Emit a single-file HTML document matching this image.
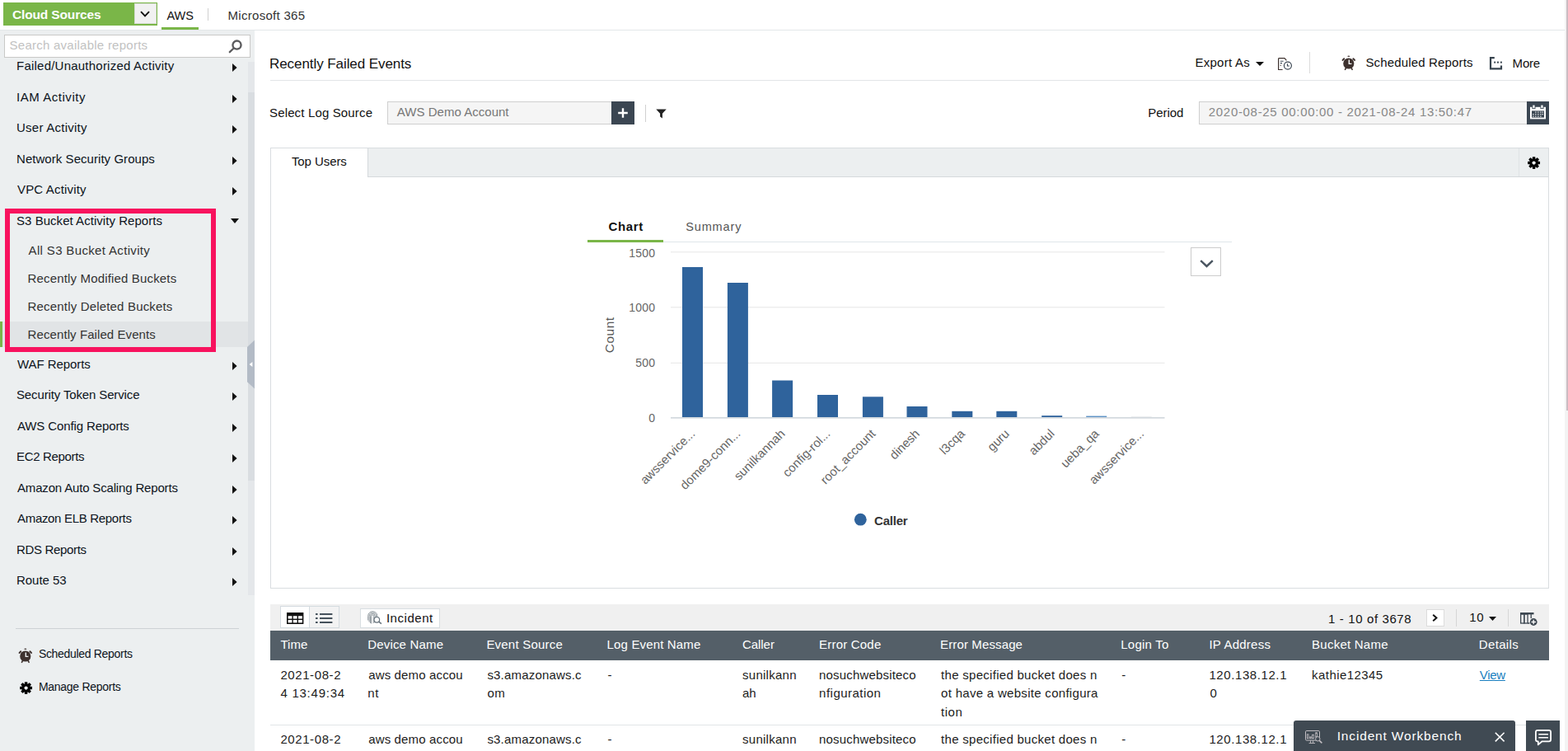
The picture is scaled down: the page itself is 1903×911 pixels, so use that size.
<!DOCTYPE html>
<html><head><meta charset="utf-8"><title>Recently Failed Events</title>
<style>
html,body{margin:0;padding:0;}
body{width:1903px;height:911px;overflow:hidden;position:relative;background:#fff;font-family:"Liberation Sans",sans-serif;font-size:15px;color:#111;}
.a{position:absolute;box-sizing:border-box;}
.t{position:absolute;white-space:pre;line-height:20px;}
svg{position:absolute;overflow:visible;}
</style></head><body>
<div class="a" style="left:0px;top:36px;width:1899px;height:1px;background:#e3e7e9;"></div>
<div class="a" style="left:4px;top:3px;width:187px;height:28px;background:#7ab648;"></div>
<div class="t" style="left:15.00px;top:8px;font-size:15.5px;color:#fff;letter-spacing:-0.150px;font-weight:bold;">Cloud Sources</div>
<div class="a" style="left:163px;top:4px;width:27px;height:25px;background:#f1f1f1;border:1px solid #d6dcd2;"></div>
<svg style="left:170px;top:13px" width="12" height="8" viewBox="0 0 12 8"><path d="M1 1.2 L6 6.4 L11 1.2" fill="none" stroke="#111" stroke-width="1.9"/></svg>
<div class="t" style="left:202.50px;top:9px;font-size:14.5px;color:#111;letter-spacing:-0.050px;">AWS</div>
<div class="a" style="left:196px;top:33px;width:45px;height:3px;background:#7ab648;"></div>
<div class="a" style="left:252px;top:10px;width:1px;height:15px;background:#d0d0d0;"></div>
<div class="t" style="left:276.50px;top:9px;font-size:15px;color:#333;letter-spacing:0.292px;">Microsoft 365</div>
<div class="a" style="left:0px;top:37px;width:309px;height:874px;background:#eceff0;"></div>
<div class="a" style="left:301px;top:75px;width:8px;height:647px;background:#e4e7ea;"></div>
<div class="a" style="left:301px;top:112px;width:8px;height:471px;background:#d9dde1;"></div>
<div class="a" style="left:5px;top:42px;width:299px;height:28px;background:#fff;border:1px solid #c9c9c7;"></div>
<div class="t" style="left:11.60px;top:45px;font-size:15px;color:#c2c2c2;letter-spacing:0.248px;">Search available reports</div>
<svg style="left:277px;top:48px" width="17" height="17" viewBox="0 0 17 17"><circle cx="10.5" cy="6.6" r="5.05" fill="none" stroke="#5c5c5e" stroke-width="2.4"/><path d="M6.7 10.5 L1.8 15.2" stroke="#5c5c5e" stroke-width="2.3" stroke-linecap="round"/></svg>
<div class="a" style="left:0px;top:390px;width:301px;height:31px;background:#e1e4e6;"></div>
<div class="a" style="left:0px;top:390px;width:3px;height:31px;background:#7ab648;"></div>
<div class="t" style="left:20.00px;top:70px;font-size:15px;color:#0d1420;letter-spacing:0.226px;">Failed/Unauthorized Activity</div>
<svg style="left:282.3px;top:77.0px" width="6" height="10" viewBox="0 0 6 10"><path d="M0 0 L5.6 5 L0 10 Z" fill="#111"/></svg>
<div class="t" style="left:20.00px;top:108px;font-size:15px;color:#0d1420;letter-spacing:0.545px;">IAM Activity</div>
<svg style="left:282.3px;top:115.0px" width="6" height="10" viewBox="0 0 6 10"><path d="M0 0 L5.6 5 L0 10 Z" fill="#111"/></svg>
<div class="t" style="left:20.00px;top:145px;font-size:15px;color:#0d1420;letter-spacing:0.250px;">User Activity</div>
<svg style="left:282.3px;top:152.0px" width="6" height="10" viewBox="0 0 6 10"><path d="M0 0 L5.6 5 L0 10 Z" fill="#111"/></svg>
<div class="t" style="left:20.00px;top:183px;font-size:15px;color:#0d1420;letter-spacing:0.050px;">Network Security Groups</div>
<svg style="left:282.3px;top:190.0px" width="6" height="10" viewBox="0 0 6 10"><path d="M0 0 L5.6 5 L0 10 Z" fill="#111"/></svg>
<div class="t" style="left:21.00px;top:220px;font-size:15px;color:#0d1420;letter-spacing:0.164px;">VPC Activity</div>
<svg style="left:282.3px;top:227.0px" width="6" height="10" viewBox="0 0 6 10"><path d="M0 0 L5.6 5 L0 10 Z" fill="#111"/></svg>
<div class="t" style="left:20.00px;top:258px;font-size:15px;color:#0d1420;letter-spacing:0.040px;">S3 Bucket Activity Reports</div>
<svg style="left:280px;top:265.0px" width="10" height="6" viewBox="0 0 10 6"><path d="M0 0 H10 L5 6 Z" fill="#111"/></svg>
<div class="t" style="left:21.00px;top:432px;font-size:15px;color:#0d1420;letter-spacing:-0.070px;">WAF Reports</div>
<svg style="left:282.3px;top:439.0px" width="6" height="10" viewBox="0 0 6 10"><path d="M0 0 L5.6 5 L0 10 Z" fill="#111"/></svg>
<div class="t" style="left:20.00px;top:469px;font-size:15px;color:#0d1420;letter-spacing:-0.133px;">Security Token Service</div>
<svg style="left:282.3px;top:476.0px" width="6" height="10" viewBox="0 0 6 10"><path d="M0 0 L5.6 5 L0 10 Z" fill="#111"/></svg>
<div class="t" style="left:21.00px;top:507px;font-size:15px;color:#0d1420;letter-spacing:-0.118px;">AWS Config Reports</div>
<svg style="left:282.3px;top:514.0px" width="6" height="10" viewBox="0 0 6 10"><path d="M0 0 L5.6 5 L0 10 Z" fill="#111"/></svg>
<div class="t" style="left:20.00px;top:544px;font-size:15px;color:#0d1420;letter-spacing:-0.330px;">EC2 Reports</div>
<svg style="left:282.3px;top:551.0px" width="6" height="10" viewBox="0 0 6 10"><path d="M0 0 L5.6 5 L0 10 Z" fill="#111"/></svg>
<div class="t" style="left:21.00px;top:582px;font-size:15px;color:#0d1420;letter-spacing:-0.169px;">Amazon Auto Scaling Reports</div>
<svg style="left:282.3px;top:589.0px" width="6" height="10" viewBox="0 0 6 10"><path d="M0 0 L5.6 5 L0 10 Z" fill="#111"/></svg>
<div class="t" style="left:21.00px;top:619px;font-size:15px;color:#0d1420;letter-spacing:-0.312px;">Amazon ELB Reports</div>
<svg style="left:282.3px;top:626.0px" width="6" height="10" viewBox="0 0 6 10"><path d="M0 0 L5.6 5 L0 10 Z" fill="#111"/></svg>
<div class="t" style="left:20.00px;top:657px;font-size:15px;color:#0d1420;letter-spacing:-0.330px;">RDS Reports</div>
<svg style="left:282.3px;top:664.0px" width="6" height="10" viewBox="0 0 6 10"><path d="M0 0 L5.6 5 L0 10 Z" fill="#111"/></svg>
<div class="t" style="left:20.00px;top:694px;font-size:15px;color:#0d1420;letter-spacing:-0.043px;">Route 53</div>
<svg style="left:282.3px;top:701.0px" width="6" height="10" viewBox="0 0 6 10"><path d="M0 0 L5.6 5 L0 10 Z" fill="#111"/></svg>
<div class="t" style="left:34.60px;top:294px;font-size:15px;color:#333;letter-spacing:0.343px;">All S3 Bucket Activity</div>
<div class="t" style="left:33.60px;top:328px;font-size:15px;color:#333;letter-spacing:0.158px;">Recently Modified Buckets</div>
<div class="t" style="left:33.60px;top:362px;font-size:15px;color:#333;letter-spacing:0.174px;">Recently Deleted Buckets</div>
<div class="t" style="left:33.60px;top:396px;font-size:15px;color:#333;letter-spacing:0.086px;">Recently Failed Events</div>
<div class="a" style="left:6px;top:253px;width:256px;height:174px;border:6px solid #f8125e;"></div>
<svg style="left:299px;top:412px" width="10" height="60" viewBox="0 0 10 60"><path d="M10 0.6 L10 59.4 L1 51.2 L1 9 Z" fill="#b3bbc6"/><path d="M7.4 27 L3.6 30 L7.4 33 Z" fill="#fff"/></svg>
<div class="a" style="left:19px;top:762px;width:271px;height:1px;background:#cdd2d5;"></div>
<div class="t" style="left:46.90px;top:783px;font-size:14px;color:#0d1420;letter-spacing:-0.312px;">Scheduled Reports</div>
<div class="t" style="left:46.90px;top:823px;font-size:14px;color:#0d1420;letter-spacing:-0.277px;">Manage Reports</div>
<svg style="left:21.8px;top:785.5px" width="18" height="19" viewBox="0 0 18 19"><circle cx="8.8" cy="10" r="6.6" fill="#3e322f"/><path d="M9.3 5.6 V10.4 H12.4" fill="none" stroke="#eceff0" stroke-width="1.4"/><path d="M1.6 5.9 L3.2 4.2 M16 5.9 L14.4 4.2" stroke="#3e322f" stroke-width="2" stroke-linecap="round"/><path d="M5.5 15.4 L4.5 17.4 M12.1 15.4 L13.1 17.4" stroke="#3e322f" stroke-width="1.6" stroke-linecap="round"/><path d="M7.6 1.5 Q8.8 0.6 10 1.5" fill="none" stroke="#3e322f" stroke-width="1.3"/></svg>
<svg style="left:24px;top:827.4px" width="15.2" height="15.2" viewBox="-10 -10 20 20"><g fill="#000"><rect x="-2.3" y="-9.8" width="4.6" height="19.6" rx="0.9" transform="rotate(0)"/><rect x="-2.3" y="-9.8" width="4.6" height="19.6" rx="0.9" transform="rotate(45)"/><rect x="-2.3" y="-9.8" width="4.6" height="19.6" rx="0.9" transform="rotate(90)"/><rect x="-2.3" y="-9.8" width="4.6" height="19.6" rx="0.9" transform="rotate(135)"/><circle r="7"/></g><circle r="2.8" fill="#eceff0"/></svg>
<div class="t" style="left:327.00px;top:68px;font-size:17px;color:#111;letter-spacing:-0.071px;">Recently Failed Events</div>
<div class="a" style="left:328px;top:97px;width:1552px;height:1px;background:#e2e5e7;"></div>
<div class="t" style="left:1450.40px;top:66px;font-size:15px;color:#111;letter-spacing:0.275px;">Export As</div>
<svg style="left:1524.3px;top:74.8px" width="10" height="5" viewBox="0 0 10 5"><path d="M0 0 H10 L5 5 Z" fill="#111"/></svg>
<svg style="left:1551px;top:70px" width="18" height="16" viewBox="0 0 18 16"><path d="M0.6 0.7 H8 L10.4 3.3 M0.6 0.7 V14.5 H5.6" fill="none" stroke="#3e322f" stroke-width="1.2"/><path d="M2.8 4.3 H6.6 M2.8 6.6 H5" stroke="#3e4a56" stroke-width="1.1"/><rect x="2.7" y="8.8" width="1.1" height="1.1" fill="#3e322f"/><circle cx="11.9" cy="9.6" r="4.5" fill="#fff" stroke="#3b4652" stroke-width="1.2"/><path d="M11.5 7.3 V10 H13.8" fill="none" stroke="#3b4652" stroke-width="1.1"/></svg>
<div class="a" style="left:1589px;top:63px;width:1px;height:26px;background:#dcdcdc;"></div>
<svg style="left:1627.5px;top:66.5px" width="18" height="19" viewBox="0 0 18 19"><circle cx="8.8" cy="10" r="6.6" fill="#3e322f"/><path d="M9.3 5.6 V10.4 H12.4" fill="none" stroke="#fff" stroke-width="1.4"/><path d="M1.6 5.9 L3.2 4.2 M16 5.9 L14.4 4.2" stroke="#3e322f" stroke-width="2" stroke-linecap="round"/><path d="M5.5 15.4 L4.5 17.4 M12.1 15.4 L13.1 17.4" stroke="#3e322f" stroke-width="1.6" stroke-linecap="round"/><path d="M7.6 1.5 Q8.8 0.6 10 1.5" fill="none" stroke="#3e322f" stroke-width="1.3"/></svg>
<div class="t" style="left:1657.40px;top:66px;font-size:15px;color:#111;letter-spacing:0.162px;">Scheduled Reports</div>
<svg style="left:1808px;top:69.4px" width="15" height="15.6" viewBox="0 0 15 15.6"><path d="M5.8 1.2 H1 V14.3 H14 V10.6" fill="none" stroke="#37434e" stroke-width="2.2"/><g fill="#37434e"><rect x="5.2" y="5.6" width="1.9" height="2"/><rect x="9" y="5.6" width="1.9" height="2"/><rect x="12.9" y="5.6" width="2" height="2"/></g></svg>
<div class="t" style="left:1835.60px;top:67px;font-size:15px;color:#111;letter-spacing:-0.200px;">More</div>
<div class="t" style="left:327.00px;top:127px;font-size:15px;color:#111;letter-spacing:0.150px;">Select Log Source</div>
<div class="a" style="left:470px;top:123px;width:273px;height:28px;background:#f5f5f5;border:1px solid #cfcfcf;"></div>
<div class="t" style="left:481.80px;top:126px;font-size:15px;color:#777;letter-spacing:0.027px;">AWS Demo Account</div>
<div class="a" style="left:742px;top:123px;width:28px;height:28px;background:#3b4652;"></div>
<svg style="left:749px;top:130px" width="14" height="14" viewBox="0 0 14 14"><path d="M7 1.2 V12.8 M1.2 7 H12.8" stroke="#fff" stroke-width="2.4"/></svg>
<div class="a" style="left:783px;top:127px;width:1px;height:21px;background:#d0d0d0;"></div>
<svg style="left:795.5px;top:131.5px" width="13" height="12" viewBox="0 0 13 12"><path d="M0.3 0.5 H12.7 L7.9 5.8 V11.5 L5.1 9.6 V5.8 Z" fill="#222"/></svg>
<div class="t" style="left:1393.30px;top:127px;font-size:15px;color:#111;letter-spacing:-0.060px;">Period</div>
<div class="a" style="left:1455px;top:123px;width:399px;height:28px;background:#f5f5f5;border:1px solid #cfcfcf;"></div>
<div class="t" style="left:1466.80px;top:126px;font-size:15px;color:#888;letter-spacing:0.685px;">2020-08-25 00:00:00 - 2021-08-24 13:50:47</div>
<div class="a" style="left:1853px;top:123px;width:27px;height:28px;background:#3b4652;"></div>
<svg style="left:1857px;top:126.8px" width="19" height="17.6" viewBox="0 0 19 17.6"><rect x="0" y="2.8" width="19" height="14.6" fill="#fff"/><rect x="2" y="7.4" width="15" height="8.2" fill="#3b4753"/><rect x="2.9" y="0.1" width="3.1" height="4.6" fill="#fff" stroke="#3b4753" stroke-width="0.9"/><rect x="12.9" y="0.1" width="3.1" height="4.6" fill="#fff" stroke="#3b4753" stroke-width="0.9"/><g fill="#fff"><rect x="6.2" y="8.5" width="1.3" height="1.2"/><rect x="9.2" y="8.5" width="1.3" height="1.2"/><rect x="12.2" y="8.5" width="1.3" height="1.2"/><rect x="14.6" y="8.5" width="1.3" height="1.2"/><rect x="3.2" y="11" width="1.3" height="1.2"/><rect x="6.2" y="11" width="1.3" height="1.2"/><rect x="9.2" y="11" width="1.3" height="1.2"/><rect x="12.2" y="11" width="1.3" height="1.2"/><rect x="14.6" y="11" width="1.3" height="1.2"/><rect x="3.2" y="13.5" width="1.3" height="1.2"/><rect x="6.2" y="13.5" width="1.3" height="1.2"/><rect x="9.2" y="13.5" width="1.3" height="1.2"/><rect x="12.2" y="13.5" width="1.3" height="1.2"/></g></svg>
<div class="a" style="left:328px;top:179px;width:1552px;height:535px;background:#fff;border:1px solid #d9dde0;"></div>
<div class="a" style="left:329px;top:180px;width:1550px;height:35px;background:#eceff0;border-bottom:1px solid #d5d9dc;"></div>
<div class="a" style="left:329px;top:180px;width:118px;height:35px;background:#fff;border-right:1px solid #d5d9dc;"></div>
<div class="t" style="left:353.90px;top:186px;font-size:15px;color:#111;letter-spacing:-0.075px;">Top Users</div>
<div class="a" style="left:1843px;top:180px;width:1px;height:34px;background:#dfe3e5;"></div>
<svg style="left:1854px;top:189.8px" width="15.2" height="15.2" viewBox="-10 -10 20 20"><g fill="#000"><rect x="-2.3" y="-9.8" width="4.6" height="19.6" rx="0.9" transform="rotate(0)"/><rect x="-2.3" y="-9.8" width="4.6" height="19.6" rx="0.9" transform="rotate(45)"/><rect x="-2.3" y="-9.8" width="4.6" height="19.6" rx="0.9" transform="rotate(90)"/><rect x="-2.3" y="-9.8" width="4.6" height="19.6" rx="0.9" transform="rotate(135)"/><circle r="7"/></g><circle r="2.8" fill="#eceff0"/></svg>
<div class="t" style="left:738.60px;top:265px;font-size:15px;color:#111;letter-spacing:0.625px;font-weight:bold;">Chart</div>
<div class="t" style="left:832.20px;top:265px;font-size:14.5px;color:#555;letter-spacing:0.867px;">Summary</div>
<div class="a" style="left:713px;top:293px;width:782px;height:1px;background:#dfe6ea;"></div>
<div class="a" style="left:713px;top:291px;width:92px;height:3px;background:#7ab648;"></div>
<div class="a" style="left:1445px;top:300px;width:37px;height:35px;background:#fff;border:1px solid #ccc;"></div>
<svg style="left:1455.5px;top:314.5px" width="17" height="10" viewBox="0 0 17 10"><path d="M1.2 1.2 L8.5 8 L15.8 1.2" fill="none" stroke="#4a5560" stroke-width="2.4"/></svg>
<svg style="left:700px;top:250px" width="800" height="410" viewBox="700 250 800 410" font-family="Liberation Sans, sans-serif"><path d="M814 305.8 H1413.5" stroke="#e6e6e6" stroke-width="1"/><path d="M814 372.8 H1413.5" stroke="#e6e6e6" stroke-width="1"/><path d="M814 440.3 H1413.5" stroke="#e6e6e6" stroke-width="1"/><rect x="814" y="506" width="599.5" height="1.7" fill="#d3d9de"/><rect x="828" y="324" width="25" height="182.0" fill="#2f639c"/><text x="844.5" y="527" font-size="15" fill="#666" text-anchor="end" transform="rotate(-45 844.5 527)">awsservice...</text><rect x="882.9" y="343" width="25" height="163.0" fill="#2f639c"/><text x="899.4" y="527" font-size="15" fill="#666" text-anchor="end" transform="rotate(-45 899.4 527)">dome9-conn...</text><rect x="937.1" y="461.5" width="25" height="44.5" fill="#2f639c"/><text x="953.6" y="527" font-size="15" fill="#666" text-anchor="end" transform="rotate(-45 953.6 527)">sunilkannah</text><rect x="992" y="479" width="25" height="27.0" fill="#2f639c"/><text x="1008.5" y="527" font-size="15" fill="#666" text-anchor="end" transform="rotate(-45 1008.5 527)">config-rol...</text><rect x="1046.9" y="481.3" width="25" height="24.7" fill="#2f639c"/><text x="1063.4" y="527" font-size="15" fill="#666" text-anchor="end" transform="rotate(-45 1063.4 527)">root_account</text><rect x="1100.5" y="493" width="25" height="13.0" fill="#2f639c"/><text x="1117.0" y="527" font-size="15" fill="#666" text-anchor="end" transform="rotate(-45 1117.0 527)">dinesh</text><rect x="1155.3" y="498.8" width="25" height="7.2" fill="#2f639c"/><text x="1171.8" y="527" font-size="15" fill="#666" text-anchor="end" transform="rotate(-45 1171.8 527)">l3cqa</text><rect x="1209.3" y="498.8" width="25" height="7.2" fill="#2f639c"/><text x="1225.8" y="527" font-size="15" fill="#666" text-anchor="end" transform="rotate(-45 1225.8 527)">guru</text><rect x="1264.2" y="504.2" width="25" height="1.8" fill="#2f639c"/><text x="1280.7" y="527" font-size="15" fill="#666" text-anchor="end" transform="rotate(-45 1280.7 527)">abdul</text><rect x="1318.2" y="504.6" width="25" height="1.4" fill="#5f93c6"/><text x="1334.7" y="527" font-size="15" fill="#666" text-anchor="end" transform="rotate(-45 1334.7 527)">ueba_qa</text><rect x="1372.7" y="505.6" width="25" height="0.4" fill="#d0d4d8"/><text x="1389.2" y="527" font-size="15" fill="#666" text-anchor="end" transform="rotate(-45 1389.2 527)">awsservice...</text><text x="795.3" y="311.7" font-size="14" fill="#666" text-anchor="end" letter-spacing="0.25">1500</text><text x="795.3" y="378.3" font-size="14" fill="#666" text-anchor="end" letter-spacing="0.25">1000</text><text x="795.3" y="445.3" font-size="14" fill="#666" text-anchor="end" letter-spacing="0.25">500</text><text x="795.3" y="511.7" font-size="14" fill="#666" text-anchor="end" letter-spacing="0.25">0</text><text x="745" y="406.3" font-size="15.5" letter-spacing="0.5" fill="#555" text-anchor="middle" transform="rotate(-90 745 406.3)">Count</text><circle cx="1044.3" cy="630.2" r="7.4" fill="#2f639c"/></svg>
<div class="t" style="left:1061.00px;top:622px;font-size:15px;color:#333;letter-spacing:-0.200px;font-weight:bold;">Caller</div>
<div class="a" style="left:328px;top:733px;width:1552px;height:33px;background:#f0f0f0;"></div>
<div class="a" style="left:340px;top:735px;width:72px;height:27px;background:#f3f3f3;border:1px solid #d4dbe0;"></div>
<div class="a" style="left:341px;top:736px;width:35px;height:25px;background:#fff;border-right:1px solid #d4dbe0;"></div>
<svg style="left:347.8px;top:742.8px" width="20.4" height="14" viewBox="0 0 20.4 14"><rect x="0" y="0" width="20.4" height="14" fill="#111"/><g fill="#fff"><rect x="1.6" y="4.2" width="4.8" height="3.4"/><rect x="7.8" y="4.2" width="4.8" height="3.4"/><rect x="14" y="4.2" width="4.8" height="3.4"/><rect x="1.6" y="9" width="4.8" height="3.4"/><rect x="7.8" y="9" width="4.8" height="3.4"/><rect x="14" y="9" width="4.8" height="3.4"/></g></svg>
<svg style="left:382.5px;top:744px" width="20.4" height="12" viewBox="0 0 20.4 12"><g fill="#46525c"><rect x="0" y="0" width="2.6" height="2"/><rect x="5" y="0" width="15.4" height="2"/><rect x="0" y="5" width="2.6" height="2"/><rect x="5" y="5" width="15.4" height="2"/><rect x="0" y="10" width="2.6" height="2"/><rect x="5" y="10" width="15.4" height="2"/></g></svg>
<div class="a" style="left:437px;top:738px;width:97px;height:24px;background:#fff;border:1px solid #d8dee2;"></div>
<svg style="left:445.5px;top:741px" width="18" height="17" viewBox="0 0 18 17"><g fill="none" stroke="#7f8990" stroke-width="0.9"><path d="M0.7 11.5 V6.3 A5.6 5.6 0 0 1 11.9 6.3 V8.5"/><path d="M2.1 13.5 V6.3 A4.2 4.2 0 0 1 10.5 6.3 V9.5"/><path d="M3.5 15 V6.3 A2.8 2.8 0 0 1 9.1 6.3 V13.5"/><path d="M4.9 15.5 V6.3 A1.4 1.4 0 0 1 7.7 6.3 V15"/></g><circle cx="11.3" cy="10.8" r="3.3" fill="#fff" stroke="#66727c" stroke-width="1.2"/><path d="M13.7 13.2 L16.9 15.6" stroke="#66727c" stroke-width="1.6"/></svg>
<div class="t" style="left:468.90px;top:740px;font-size:15px;color:#111;letter-spacing:0.543px;">Incident</div>
<div class="t" style="left:1612.10px;top:741px;font-size:15px;color:#111;letter-spacing:0.615px;">1 - 10 of 3678</div>
<div class="a" style="left:1730.5px;top:739px;width:22.5px;height:21px;background:#fff;border:1px solid #dcdcdc;"></div>
<svg style="left:1738.4px;top:745.2px" width="7" height="9" viewBox="0 0 7 9"><path d="M1.2 0.8 L5.4 4.5 L1.2 8.2" fill="none" stroke="#111" stroke-width="2"/></svg>
<div class="a" style="left:1767px;top:739px;width:1px;height:21px;background:#d6d6d6;"></div>
<div class="t" style="left:1783.20px;top:739px;font-size:15px;color:#111;letter-spacing:0.600px;">10</div>
<svg style="left:1806.6px;top:747.8px" width="9" height="5" viewBox="0 0 9 5"><path d="M0 0 H9 L4.5 5 Z" fill="#111"/></svg>
<div class="a" style="left:1830px;top:739px;width:1px;height:21px;background:#d6d6d6;"></div>
<svg style="left:1845.2px;top:743px" width="21" height="15" viewBox="0 0 21 15"><rect x="0" y="0" width="16.5" height="2.4" fill="#3e4852"/><g fill="none" stroke="#3e4852" stroke-width="1.3"><rect x="0.65" y="2" width="4.2" height="11"/><rect x="4.85" y="2" width="4.2" height="11"/><path d="M9.05 13 H11.5 M13.2 2 V7"/></g><circle cx="16.2" cy="11.5" r="4.4" fill="#3e4852"/><path d="M16.2 8.8 V14.2 M13.5 11.5 H18.9" stroke="#fff" stroke-width="1.3"/></svg>
<div class="a" style="left:328px;top:765.3px;width:1552px;height:35.5px;background:#545f68;"></div>
<div class="t" style="left:340.40px;top:772px;font-size:15px;color:#fff;letter-spacing:0.100px;">Time</div>
<div class="t" style="left:446.20px;top:772px;font-size:15px;color:#fff;letter-spacing:0.180px;">Device Name</div>
<div class="t" style="left:590.40px;top:772px;font-size:15px;color:#fff;letter-spacing:0.209px;">Event Source</div>
<div class="t" style="left:736.60px;top:772px;font-size:15px;color:#fff;letter-spacing:0.154px;">Log Event Name</div>
<div class="t" style="left:901.00px;top:772px;font-size:15px;color:#fff;letter-spacing:-0.060px;">Caller</div>
<div class="t" style="left:994.10px;top:772px;font-size:15px;color:#fff;letter-spacing:0.200px;">Error Code</div>
<div class="t" style="left:1141.10px;top:772px;font-size:15px;color:#fff;letter-spacing:0.125px;">Error Message</div>
<div class="t" style="left:1360.20px;top:772px;font-size:15px;color:#fff;letter-spacing:0.257px;">Login To</div>
<div class="t" style="left:1467.40px;top:772px;font-size:15px;color:#fff;letter-spacing:0.256px;">IP Address</div>
<div class="t" style="left:1592.10px;top:772px;font-size:15px;color:#fff;letter-spacing:0.240px;">Bucket Name</div>
<div class="t" style="left:1794.80px;top:772px;font-size:15px;color:#fff;letter-spacing:0.333px;">Details</div>
<div class="t" style="left:340.40px;top:809px;font-size:15px;color:#1c1c1c;letter-spacing:0.588px;">2021-08-2</div>
<div class="t" style="left:340.40px;top:831px;font-size:15px;color:#1c1c1c;letter-spacing:0.756px;">4 13:49:34</div>
<div class="t" style="left:447.20px;top:809px;font-size:15px;color:#1c1c1c;letter-spacing:0.146px;">aws demo accou</div>
<div class="t" style="left:446.20px;top:831px;font-size:15px;color:#1c1c1c;letter-spacing:0.600px;">nt</div>
<div class="t" style="left:591.40px;top:809px;font-size:15px;color:#1c1c1c;letter-spacing:0.192px;">s3.amazonaws.c</div>
<div class="t" style="left:591.40px;top:831px;font-size:15px;color:#1c1c1c;letter-spacing:0.600px;">om</div>
<div class="t" style="left:737.60px;top:809px;font-size:15px;color:#1c1c1c;">-</div>
<div class="t" style="left:901.00px;top:809px;font-size:15px;color:#1c1c1c;letter-spacing:0.275px;">sunilkann</div>
<div class="t" style="left:901.00px;top:831px;font-size:15px;color:#1c1c1c;letter-spacing:0.000px;">ah</div>
<div class="t" style="left:994.10px;top:809px;font-size:15px;color:#1c1c1c;letter-spacing:0.171px;">nosuchwebsiteco</div>
<div class="t" style="left:994.10px;top:831px;font-size:15px;color:#1c1c1c;letter-spacing:0.480px;">nfiguration</div>
<div class="t" style="left:1142.10px;top:809px;font-size:15px;color:#1c1c1c;letter-spacing:0.285px;">the specified bucket does n</div>
<div class="t" style="left:1142.10px;top:831px;font-size:15px;color:#1c1c1c;letter-spacing:0.296px;">ot have a website configura</div>
<div class="t" style="left:1142.10px;top:854px;font-size:15px;color:#1c1c1c;letter-spacing:0.500px;">tion</div>
<div class="t" style="left:1361.20px;top:809px;font-size:15px;color:#1c1c1c;">-</div>
<div class="t" style="left:1467.40px;top:809px;font-size:15px;color:#1c1c1c;letter-spacing:0.591px;">120.138.12.1</div>
<div class="t" style="left:1468.40px;top:831px;font-size:15px;color:#1c1c1c;">0</div>
<div class="t" style="left:1592.10px;top:809px;font-size:15px;color:#1c1c1c;letter-spacing:0.430px;">kathie12345</div>
<div class="t" style="left:1795.80px;top:809px;font-size:15px;color:#1a7fc0;letter-spacing:-0.300px;text-decoration:underline;">View</div>
<div class="a" style="left:328px;top:879px;width:1552px;height:1px;background:#e1e5e7;"></div>
<div class="t" style="left:340.40px;top:887px;font-size:15px;color:#1c1c1c;letter-spacing:0.588px;">2021-08-2</div>
<div class="t" style="left:447.20px;top:887px;font-size:15px;color:#1c1c1c;letter-spacing:0.146px;">aws demo accou</div>
<div class="t" style="left:591.40px;top:887px;font-size:15px;color:#1c1c1c;letter-spacing:0.192px;">s3.amazonaws.c</div>
<div class="t" style="left:737.60px;top:887px;font-size:15px;color:#1c1c1c;">-</div>
<div class="t" style="left:901.00px;top:887px;font-size:15px;color:#1c1c1c;letter-spacing:0.275px;">sunilkann</div>
<div class="t" style="left:994.10px;top:887px;font-size:15px;color:#1c1c1c;letter-spacing:0.171px;">nosuchwebsiteco</div>
<div class="t" style="left:1142.10px;top:887px;font-size:15px;color:#1c1c1c;letter-spacing:0.285px;">the specified bucket does n</div>
<div class="t" style="left:1361.20px;top:887px;font-size:15px;color:#1c1c1c;">-</div>
<div class="t" style="left:1467.40px;top:887px;font-size:15px;color:#1c1c1c;letter-spacing:0.591px;">120.138.12.1</div>
<div class="a" style="left:1570px;top:874px;width:269px;height:40px;background:#404a53;border-radius:3px 3px 0 0;"></div>
<svg style="left:1584px;top:886px" width="21" height="16" viewBox="0 0 21 16"><g fill="none" stroke="#c2bec3"><rect x="0.5" y="0.5" width="17" height="11.6" rx="1.3" stroke-width="1"/><g stroke-width="0.8"><rect x="2.3" y="4.8" width="1.7" height="5"/><rect x="5.7" y="7.8" width="1.5" height="2"/><rect x="8.6" y="5.3" width="1.7" height="4.5"/><rect x="12.7" y="2.7" width="1.7" height="5.5"/></g><path d="M6.6 12.2 V15.3 M9.6 12.2 V15.3 M4.6 15.5 H12" stroke-width="0.9"/><circle cx="15.3" cy="10.3" r="2.7" fill="#404a53" stroke-width="1"/><path d="M17.3 12.4 L20.4 15.4" stroke-width="1.5"/></g></svg>
<div class="t" style="left:1622.70px;top:883px;font-size:15.5px;color:#fff;letter-spacing:0.841px;">Incident Workbench</div>
<svg style="left:1814.2px;top:887.6px" width="12.4" height="12.2" viewBox="0 0 12.4 12.2"><path d="M0.8 0.8 L11.6 11.4 M11.6 0.8 L0.8 11.4" stroke="#fff" stroke-width="1.6"/></svg>
<div class="a" style="left:1852px;top:874px;width:41px;height:40px;background:#404a53;"></div>
<svg style="left:1863px;top:884.7px" width="20" height="20" viewBox="0 0 20 20"><path d="M3.2 0.9 H16.8 Q19.1 0.9 19.1 3.2 V12 Q19.1 14.3 16.8 14.3 H8.6 L3.8 18.4 V14.3 H3.2 Q0.9 14.3 0.9 12 V3.2 Q0.9 0.9 3.2 0.9 Z" fill="none" stroke="#fff" stroke-width="1.8" stroke-linejoin="round"/><path d="M4.3 5.7 H16 M4.3 9.7 H16" stroke="#fff" stroke-width="1.5"/></svg>
<div class="a" style="left:1899px;top:0px;width:4px;height:911px;background:#f3f3f3;"></div>
<div class="a" style="left:1901px;top:0px;width:2px;height:498px;background:#cbbcc3;"></div>
</body></html>
